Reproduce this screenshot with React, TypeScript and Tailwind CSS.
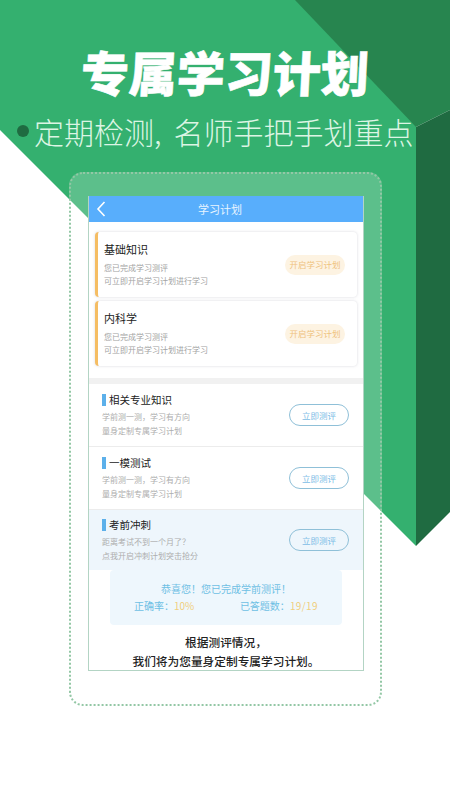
const cjk = "font-['Noto_Sans_CJK_SC','Noto_Sans',sans-serif]";

const plans = ["基础知识", "内科学"];

const tests = [
  { title: "相关专业知识", lines: ["学前测一测，学习有方向", "量身定制专属学习计划"], height: "h-[64px]", active: false },
  { title: "一模测试", lines: ["学前测一测，学习有方向", "量身定制专属学习计划"], height: "h-[64px]", active: false },
  { title: "考前冲刺", lines: ["距离考试不到一个月了？", "点我开启冲刺计划突击抢分"], height: "h-[61px]", active: true },
];

function Backdrop() {
  return (
    <svg className="absolute inset-0" width="450" height="800" viewBox="0 0 450 800">
      <polygon points="0,0 416,0 416,546 0,130" fill="#34b06f" />
      <polygon points="295,0 450,0 450,110 416,127" fill="#27854f" />
      <polygon points="416,127 450,110 450,512 416,546" fill="#1f6b41" />
    </svg>
  );
}

function PlanCard({ title }: { title: string }) {
  return (
    <div className="flex h-[65px] items-center justify-between rounded-[4px] border-l-[3px] border-l-[#f5bd63] bg-white pl-[6px] pr-[12px] shadow-[0_0_3px_rgba(120,120,140,0.28)]">
      <div>
        <div className="text-[11px] leading-[14px] text-[#222]">{title}</div>
        <div className="mt-[5px] text-[8px] leading-[13px] text-[#a3a3a3]">
          <div>您已完成学习测评</div>
          <div>可立即开启学习计划进行学习</div>
        </div>
      </div>
      <div className="flex h-[20px] w-[60px] items-center justify-center rounded-full bg-[#fdf3e2] text-[8.5px] text-[#efc27e]">
        开启学习计划
      </div>
    </div>
  );
}

function TestRow({ title, lines, height, active }: (typeof tests)[number]) {
  return (
    <div className={`flex ${height} items-center justify-between pl-[13px] pr-[14px] ${active ? "bg-[#eef6fc]" : "border-b border-[#ececec] bg-white"}`}>
      <div className="pt-[2px]">
        <div className="flex items-center gap-[3px]">
          <span className="h-[12px] w-[4px] bg-[#5cb0ea]" />
          <span className="text-[10.5px] leading-[14px] text-[#222]">{title}</span>
        </div>
        <div className="mt-[3px] text-[8px] leading-[14px] text-[#adadad]">
          {lines.map((line) => (
            <div key={line}>{line}</div>
          ))}
        </div>
      </div>
      <div className="flex h-[22px] w-[60px] items-center justify-center rounded-full border border-[#8fc0d8] text-[8.5px] text-[#7dbde6]">
        立即测评
      </div>
    </div>
  );
}

export default function App() {
  return (
    <div className={`relative h-[800px] w-[450px] overflow-hidden bg-white ${cjk}`}>
      <Backdrop />
      <div className="relative flex flex-col">
        <h1 className="mt-[42px] -skew-x-3 text-center text-[48px] leading-[58px] font-black text-white [-webkit-text-stroke:0.6px_white]">
          专属学习计划
        </h1>
        <div className="mt-[11px] flex items-center pl-[17px]">
          <span className="mr-[5px] h-[12px] w-[12px] rounded-full bg-[#1f6b41]" />
          <span className="whitespace-nowrap text-[30px] leading-[40px] font-light text-[#dcf5e4]">
            定期检测<span className="mr-[12px]">,</span>名师手把手划重点
          </span>
        </div>

        <div className="mt-[21px] ml-[69px] h-[534px] w-[313px] rounded-[14px] border-2 border-dotted border-[#93c7a5] bg-white/20 pt-[22px] pl-[17px]">
          <div className="flex h-[475px] w-[276px] flex-col overflow-hidden border-x border-b border-[#b3d4c4] bg-white">
            <div className="relative flex h-[26px] shrink-0 items-center justify-center bg-[#58aefc] pr-[12px] text-[11px] text-[#e8f4ff]">
              <svg className="absolute left-[7px] top-[5px]" width="10" height="16" viewBox="0 0 10 16" fill="none">
                <path d="M8.5 1 L2 8 L8.5 15" stroke="#fff" strokeWidth="1.6" />
              </svg>
              学习计划
            </div>

            <div className="flex flex-col gap-[4px] px-[6px] pt-[10px]">
              {plans.map((title) => (
                <PlanCard key={title} title={title} />
              ))}
            </div>

            <div className="mt-[12px] h-[6px] shrink-0 bg-[#f1f1f1]" />

            {tests.map((test) => (
              <TestRow key={test.title} {...test} />
            ))}

            <div className="mx-[21px] flex h-[55px] shrink-0 flex-col items-center justify-center rounded-[4px] bg-[#eef7fd] text-[10px] leading-[17px]">
              <div className="text-[#6fc0e4]">恭喜您！您已完成学前测评！</div>
              <div className="flex w-full justify-between pl-[24px] pr-[24px] text-[#6fc0e4]">
                <span>
                  正确率：<span className="text-[#f0cf7d]">10%</span>
                </span>
                <span>
                  已答题数：<span className="tracking-[0.4px] text-[#f0cf7d]">19/19</span>
                </span>
              </div>
            </div>

            <div className="mt-[7px] text-center text-[11.7px] leading-[19px] font-medium text-[#222]">
              <div>根据测评情况，</div>
              <div>我们将为您量身定制专属学习计划。</div>
            </div>
          </div>
        </div>
      </div>
    </div>
  );
}
